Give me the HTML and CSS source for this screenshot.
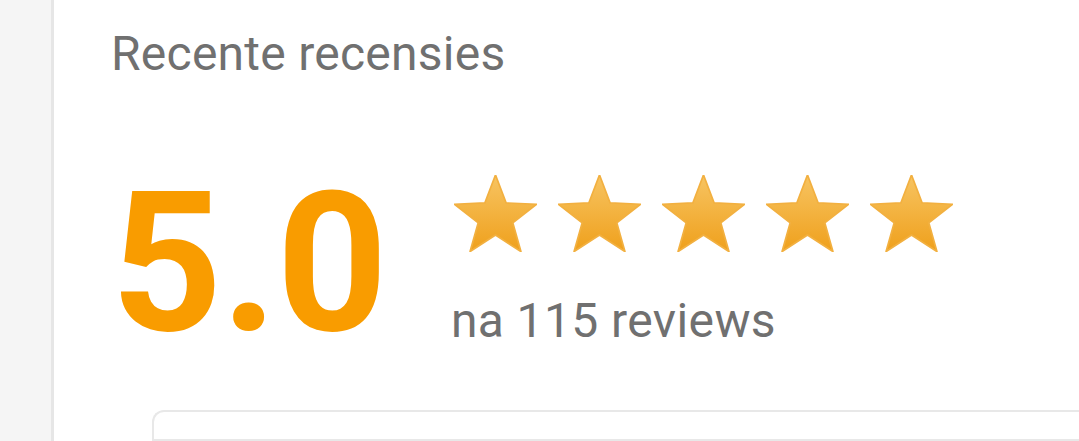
FILE: index.html
```html
<!DOCTYPE html>
<html lang="nl">
<head>
    <meta charset="UTF-8">
    <meta name="viewport" content="width=device-width, initial-scale=1.0">
    <title>Recensies</title>
    <link rel="stylesheet" href="styles.css">
</head>
<body>
    <div class="sidebar"></div>
    <div class="content">
        <h2 class="section-title">Recente recensies</h2>
        <div class="rating">
            <div class="rating-score">5.0</div>
            <div class="rating-info">
                <div class="stars">
                    <svg class="star" viewBox="2 0 96 91" preserveAspectRatio="none">
                        <defs>
                            <linearGradient id="starFill" x1="0" y1="0" x2="0" y2="1">
                                <stop offset="0" stop-color="#f7c462"/>
                                <stop offset="1" stop-color="#efa01c"/>
                            </linearGradient>
                        </defs>
                        <polygon points="50,0 62.34,33.01 97.55,34.55 69.97,56.49 79.39,90.45 50,71 20.61,90.45 30.03,56.49 2.45,34.55 37.66,33.01" fill="url(#starFill)" stroke="#f2b040" stroke-width="2" stroke-linejoin="round"/>
                    </svg>
                    <svg class="star" viewBox="2 0 96 91" preserveAspectRatio="none">
                        <polygon points="50,0 62.34,33.01 97.55,34.55 69.97,56.49 79.39,90.45 50,71 20.61,90.45 30.03,56.49 2.45,34.55 37.66,33.01" fill="url(#starFill)" stroke="#f2b040" stroke-width="2" stroke-linejoin="round"/>
                    </svg>
                    <svg class="star" viewBox="2 0 96 91" preserveAspectRatio="none">
                        <polygon points="50,0 62.34,33.01 97.55,34.55 69.97,56.49 79.39,90.45 50,71 20.61,90.45 30.03,56.49 2.45,34.55 37.66,33.01" fill="url(#starFill)" stroke="#f2b040" stroke-width="2" stroke-linejoin="round"/>
                    </svg>
                    <svg class="star" viewBox="2 0 96 91" preserveAspectRatio="none">
                        <polygon points="50,0 62.34,33.01 97.55,34.55 69.97,56.49 79.39,90.45 50,71 20.61,90.45 30.03,56.49 2.45,34.55 37.66,33.01" fill="url(#starFill)" stroke="#f2b040" stroke-width="2" stroke-linejoin="round"/>
                    </svg>
                    <svg class="star" viewBox="2 0 96 91" preserveAspectRatio="none">
                        <polygon points="50,0 62.34,33.01 97.55,34.55 69.97,56.49 79.39,90.45 50,71 20.61,90.45 30.03,56.49 2.45,34.55 37.66,33.01" fill="url(#starFill)" stroke="#f2b040" stroke-width="2" stroke-linejoin="round"/>
                    </svg>
                </div>
                <div class="review-count">na 115 reviews</div>
            </div>
        </div>
        <div class="review-card"></div>
    </div>
</body>
</html>
```

FILE: styles.css
```css
html, body {
    height: 100%;
}
body {
    font-family: Roboto, "Liberation Sans", Arial, sans-serif;
    margin: 0;
    padding: 0;
    background-color: #fff;
    display: flex;
    overflow: hidden;
}
.sidebar {
    width: 51px;
    flex-shrink: 0;
    background-color: #f5f5f5;
    border-right: 3px solid #e6e6e6;
}
.content {
    flex-grow: 1;
    padding: 26px 0 0 57px;
    display: flex;
    flex-direction: column;
}
.section-title {
    margin: 0;
    font-size: 48px;
    font-weight: 400;
    color: #707070;
    line-height: 56px;
    letter-spacing: 0.25px;
}
.rating {
    display: flex;
    align-items: flex-start;
    margin-top: 85px;
}
.rating-score {
    font-size: 194px;
    font-weight: 700;
    line-height: 1;
    color: #f99c00;
    letter-spacing: -1px;
}
.rating-info {
    margin-left: 67px;
    margin-top: 8px;
    display: flex;
    flex-direction: column;
}
.stars {
    display: flex;
    gap: 21px;
}
.star {
    width: 83px;
    height: 77px;
}
.review-count {
    font-size: 48px;
    color: #707070;
    margin: 41px 0 0 -3px;
    line-height: 56px;
    letter-spacing: 0.4px;
}
.review-card {
    margin: 49px 0 0 41px;
    height: 80px;
    border: 2px solid #e8e8e8;
    border-right: none;
    border-radius: 12px 0 0 0;
}
```
